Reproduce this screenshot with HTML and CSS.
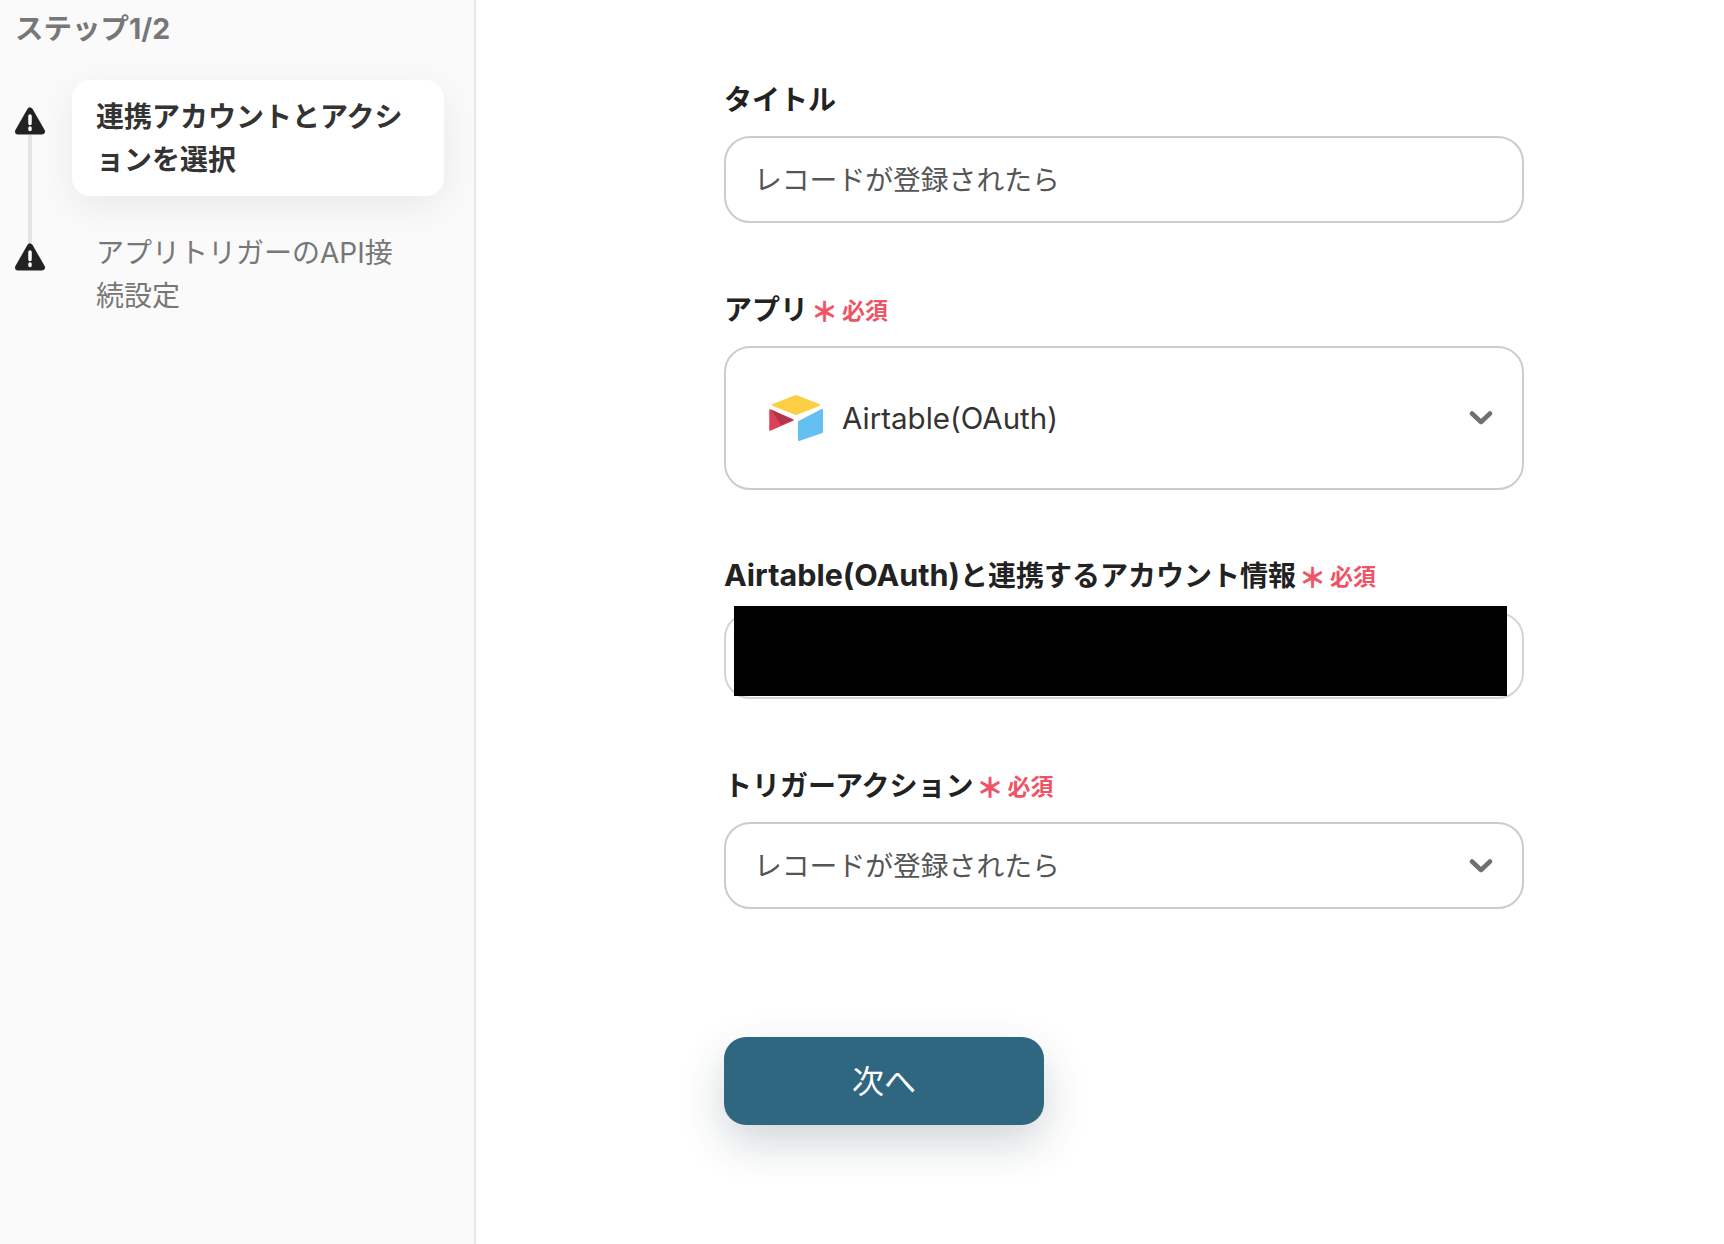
FILE: index.html
```html
<!DOCTYPE html>
<html lang="ja">
<head>
<meta charset="utf-8">
<title>ステップ1/2</title>
<link rel="stylesheet" href="styles.css">
</head>
<body>
<div class="layout">
  <aside class="sidebar">
    <div class="step-title">ステップ1/2</div>
    <ol class="steps">
      <li class="step">
        <svg class="warn" viewBox="0 0 31 28"><path class="warn-bg" d="M15 3.500 L27 24.500 L3 24.500 Z"/><path class="warn-mark" d="M15 9 V16.500 M15 21 V22.500"/></svg>
        <span class="connector"></span>
        <div class="step-card active">連携アカウントとアクションを選択</div>
      </li>
      <li class="step">
        <svg class="warn" viewBox="0 0 31 28"><path class="warn-bg" d="M15 3.500 L27 24.500 L3 24.500 Z"/><path class="warn-mark" d="M15 9 V16.500 M15 21 V22.500"/></svg>
        <div class="step-card">アプリトリガーのAPI接続設定</div>
      </li>
    </ol>
  </aside>
  <main class="content">
    <div class="field">
      <div class="label">タイトル</div>
      <div class="control short"><span class="value">レコードが登録されたら</span></div>
    </div>
    <div class="field app">
      <div class="label">アプリ<span class="req"><span class="ast">＊</span>必須</span></div>
      <div class="control tall">
        <svg class="logo" viewBox="0 0 54 46">
          <path fill="#fccf47" stroke="#fccf47" stroke-width="2" stroke-linejoin="round" d="M27 1 L4 10 L27 19 L50 10 Z"/>
          <path fill="#64c0f0" stroke="#64c0f0" stroke-width="2" stroke-linejoin="round" d="M30 27 L53 15 V37 L30 45 Z"/>
          <path fill="#dd4158" stroke="#dd4158" stroke-width="1.500" stroke-linejoin="round" d="M1 15 L24 25 L1 35 Z"/>
          <path fill="#b3334a" d="M2 14.500 L24 25 L12 30 Z"/>
        </svg>
        <span class="app-name">Airtable(OAuth)</span>
        <svg class="chev" viewBox="0 0 24 16"><path d="M3 3.500 L12 12 L21 3.500"/></svg>
      </div>
    </div>
    <div class="field account">
      <div class="label"><span class="latin">Airtable(OAuth)</span>と連携するアカウント情報<span class="req"><span class="ast">＊</span>必須</span></div>
      <div class="control account-box"><span class="redact"></span></div>
    </div>
    <div class="field">
      <div class="label">トリガーアクション<span class="req"><span class="ast">＊</span>必須</span></div>
      <div class="control short">
        <span class="value">レコードが登録されたら</span>
        <svg class="chev" viewBox="0 0 24 16"><path d="M3 3.500 L12 12 L21 3.500"/></svg>
      </div>
    </div>
    <button class="next" type="button">次へ</button>
  </main>
</div>
</body>
</html>
```

FILE: styles.css
```css
* { box-sizing: border-box; }
html, body { margin: 0; height: 100%; background: #fff; overflow: hidden; }
body {
  font-family: Inter, "Noto Sans CJK JP", "Noto Sans", sans-serif;
  color: #222;
}
.layout { display: flex; height: 1244px; }

.sidebar {
  width: 476px;
  flex: none;
  background: #fafafa;
  border-right: 2px solid #e8e8e8;
  padding: 8px 0 0 15px;
}
.step-title {
  font-size: 28.500px;
  line-height: 42px;
  font-weight: 700;
  color: #777;
}
.steps { list-style: none; margin: 30px 0 0; padding: 0; }
.step { position: relative; display: flex; align-items: flex-start; margin-bottom: 20px; }
.warn { width: 31px; height: 28px; flex: none; margin-top: 27px; }
.warn-bg { fill: #222; stroke: #222; stroke-width: 6; stroke-linejoin: round; }
.warn-mark { fill: none; stroke: #fff; stroke-width: 3.500; stroke-linecap: round; }
.connector {
  position: absolute;
  left: 13px;
  top: 55px;
  width: 4px;
  height: 108px;
  background: #e5e5e5;
}
.step-card {
  margin-left: 26px;
  width: 372px;
  padding: 16px 24px 14px;
  font-size: 28px;
  line-height: 43px;
  color: #777;
  border-radius: 18px;
}
.step-card.active {
  background: #fff;
  color: #333;
  font-weight: 700;
  box-shadow: 0 10px 40px rgba(0, 0, 0, .07);
}

.content { flex: 1; padding: 78px 0 0 248px; }
.field { width: 800px; margin-bottom: 65px; position: relative; }
.field.app { margin-bottom: 64px; }
.label {
  font-size: 28px;
  line-height: 40px;
  font-weight: 700;
  color: #222;
  padding-top: 2px;
  margin-bottom: 16px;
}
.latin { font-size: 30.500px; line-height: 1; }
.req { color: #ef5466; font-size: 23px; line-height: 1; margin-left: 3px; vertical-align: 1px; }
.ast { font-size: 27px; line-height: 1; margin-right: 4px; vertical-align: -3px; -webkit-text-stroke: .5px #ef5466; }
.control {
  display: flex;
  align-items: center;
  border: 2px solid #ccc;
  border-radius: 26px;
  background: #fff;
  padding: 0 29px 0 28px;
}
.short { height: 87px; }
.tall { height: 144px; padding-left: 43px; }
.account-box { height: 87px; border-color: #d0d5da; }
.value { font-size: 27.800px; line-height: 40px; color: #555; flex: 1; }
.app-name { font-size: 29.500px; color: #333; flex: 1; margin-left: 19px; }
.logo { width: 54px; height: 46px; flex: none; }
.chev { width: 24px; height: 16px; flex: none; }
.chev path { fill: none; stroke: #707070; stroke-width: 4.500; stroke-linecap: round; stroke-linejoin: round; }
.redact {
  position: absolute;
  left: 10px;
  top: 52px;
  width: 773px;
  height: 90px;
  background: #000;
}
.next {
  display: block;
  width: 320px;
  height: 88px;
  margin-top: 128px;
  padding: 0 0 4px;
  border: 0;
  border-radius: 22px;
  background: #2f6680;
  color: #fff;
  font: 400 32px "Noto Sans CJK JP", sans-serif;
  box-shadow: 0 18px 44px rgba(30, 50, 60, .2);
}
```
